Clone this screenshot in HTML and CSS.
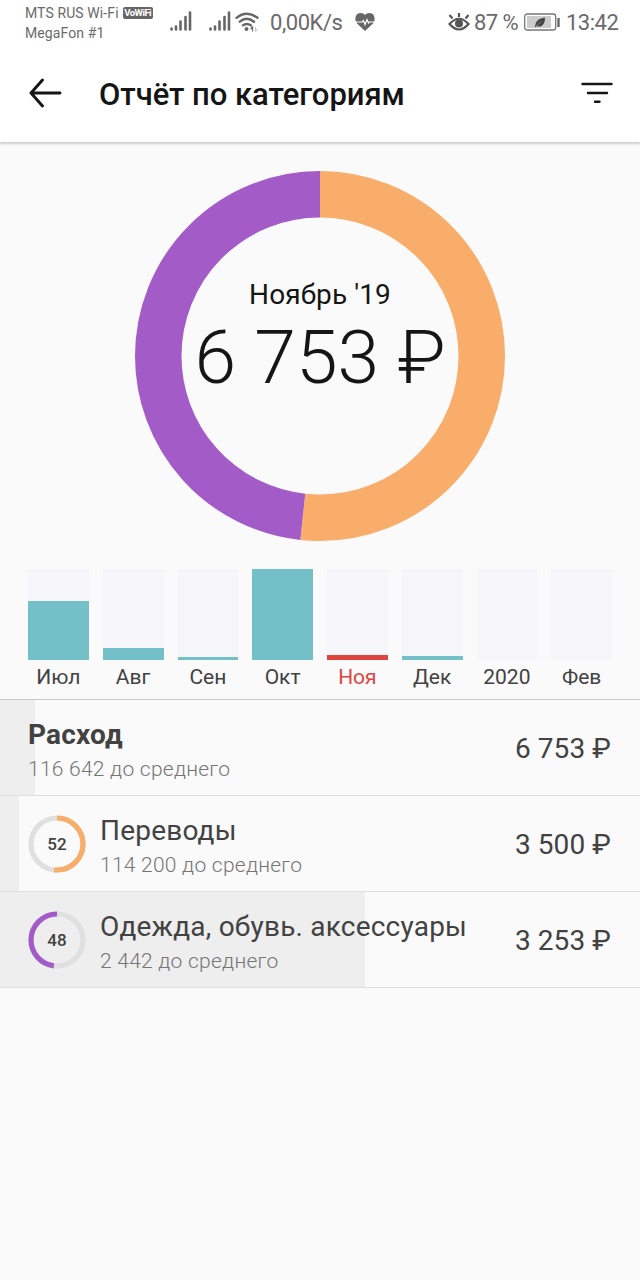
FILE: index.html
```html
<!DOCTYPE html>
<html lang="ru">
<head>
    <meta charset="UTF-8">
    <title>Отчёт по категориям</title>
    <link rel="stylesheet" href="styles.css">
</head>
<body>
    <div class="status-bar">
        <div class="carriers">
            <div class="carrier"><span class="carrier-name">MTS RUS Wi-Fi</span><span class="vowifi">VoWiFi</span></div>
            <div class="carrier"><span class="carrier-name second">MegaFon #1</span></div>
        </div>
        <svg class="signal" width="22" height="20" viewBox="0 0 22 20">
            <path d="M1.5 17.5v1M6 15.5v3M10.5 10.5v8M15.5 6v12.5M20 1.5v17"/>
        </svg>
        <svg class="signal signal-2" width="22" height="20" viewBox="0 0 22 20">
            <path d="M1.5 17.5v1M6 15.5v3M10.5 10.5v8M15.5 6v12.5M20 1.5v17"/>
        </svg>
        <svg class="wifi" width="24" height="20" viewBox="0 0 24 20">
            <path d="M1.5 5.8Q11.5-2.5 22.5 5.8M4.8 9.7Q11.5 4 19 9.7M8 13.3Q11.8 10.5 15.8 13.3"/>
            <circle cx="11.5" cy="17" r="2"/>
            <path class="wifi-arrow" d="M17.5 19v-4l-1.500 1.500"/>
            <path class="wifi-arrow faded" d="M20.500 15v4l1.500-1.500"/>
        </svg>
        <span class="speed">0,00K/s</span>
        <svg class="heart" width="20" height="18" viewBox="0 0 20 18">
            <path d="M10 18L2 10.5C-1 7 .2 0 5.500 0C7.500 0 9 .8 10 2C11 .8 12.500 0 14.500 0C19.800 0 21 7 18 10.500Z"/>
            <path class="pulse" d="M0 9h7l1.500-1.500 1.500 4 2-5 1.500 3.500 1-1h6"/>
        </svg>
        <svg class="eye" width="22" height="20" viewBox="0 0 22 20">
            <path d="M1.500 12Q11 1.500 20.500 12Q11 23 1.500 12ZM11 5V1M4.500 6.500L1.500 3M17.500 6.500L20.500 3"/>
            <circle cx="11" cy="11.500" r="4"/>
        </svg>
        <span class="percent">87 %</span>
        <svg class="battery" width="36" height="18" viewBox="0 0 36 18">
            <rect class="case" x=".7" y="1" width="31" height="16" rx="2.500"/>
            <rect class="charge" x="3" y="3" width="24" height="12"/>
            <path class="tip" d="M34.500 5v9"/>
            <path class="leaf" d="M11 14.500Q11 12 12 9.500Q14 5.500 21 4.500Q21 11.500 17 13.200Q14.500 14 12.800 13Z"/>
            <path class="vein" d="M12.500 13L17 8.500"/>
        </svg>
        <span class="clock">13:42</span>
    </div>

    <header class="header">
        <svg class="back" width="34" height="30" viewBox="0 0 34 30">
            <path d="M14.500 2L3 15l11.500 13M3 15H32"/>
        </svg>
        <h1>Отчёт по категориям</h1>
        <svg class="filter" width="34" height="22" viewBox="0 0 34 22">
            <path d="M2.500 2h29M8 11h19M15 19.800h4.500"/>
        </svg>
    </header>

    <div class="chart">
        <svg class="donut" width="370" height="370" viewBox="0 0 370 370">
            <circle class="part orange" cx="185" cy="185" r="161.75" pathLength="100" stroke-dasharray="51.7 48.3"/>
            <circle class="part purple" cx="185" cy="185" r="161.75" pathLength="100" stroke-dasharray="48.3 51.7" stroke-dashoffset="-51.7"/>
        </svg>
        <div class="total">
            <div class="total-month">Ноябрь '19</div>
            <div class="total-sum">6 753 ₽</div>
        </div>
    </div>

    <div class="months">
        <div class="month">
            <div class="track"><div class="bar" style="height: 59px"></div></div>
            <span>Июл</span>
        </div>
        <div class="month">
            <div class="track"><div class="bar" style="height: 12.5px"></div></div>
            <span>Авг</span>
        </div>
        <div class="month">
            <div class="track"><div class="bar" style="height: 3px"></div></div>
            <span>Сен</span>
        </div>
        <div class="month">
            <div class="track"><div class="bar" style="height: 91px"></div></div>
            <span>Окт</span>
        </div>
        <div class="month current">
            <div class="track"><div class="bar" style="height: 5.5px"></div></div>
            <span>Ноя</span>
        </div>
        <div class="month">
            <div class="track"><div class="bar" style="height: 4px"></div></div>
            <span>Дек</span>
        </div>
        <div class="month">
            <div class="track"></div>
            <span>2020</span>
        </div>
        <div class="month">
            <div class="track"></div>
            <span>Фев</span>
        </div>
    </div>

    <div class="list">
        <div class="row" style="background-size: 35px 100%">
            <div class="info">
                <div class="name bold">Расход</div>
                <div class="left">116 642 до среднего</div>
            </div>
            <div class="sum">6 753 ₽</div>
        </div>
        <div class="row" style="background-size: 19px 100%">
            <div class="ring">
                <svg width="58" height="58" viewBox="0 0 58 58">
                    <circle class="ring-base" cx="29" cy="29" r="26"/>
                    <circle class="ring-part orange" cx="29" cy="29" r="26" pathLength="100" stroke-dasharray="52 48"/>
                </svg>
                <span>52</span>
            </div>
            <div class="info">
                <div class="name">Переводы</div>
                <div class="left">114 200 до среднего</div>
            </div>
            <div class="sum">3 500 ₽</div>
        </div>
        <div class="row" style="background-size: 365px 100%">
            <div class="ring">
                <svg width="58" height="58" viewBox="0 0 58 58">
                    <circle class="ring-base" cx="29" cy="29" r="26"/>
                    <circle class="ring-part purple" cx="29" cy="29" r="26" pathLength="100" stroke-dasharray="48 52" stroke-dashoffset="-52"/>
                </svg>
                <span>48</span>
            </div>
            <div class="info">
                <div class="name">Одежда, обувь. аксессуары</div>
                <div class="left">2 442 до среднего</div>
            </div>
            <div class="sum">3 253 ₽</div>
        </div>
    </div>
</body>
</html>
```
FILE: styles.css
```css
* {
    box-sizing: border-box;
}

body {
    font-family: Roboto, "Noto Sans", sans-serif;
    margin: 0;
    min-height: 100vh;
    background: #fafafa;
    color: #424242;
}

svg {
    display: block;
    flex: none;
    fill: none;
}

/* status bar */
.status-bar {
    display: flex;
    align-items: flex-start;
    height: 44px;
    padding-left: 25px;
    background: #fff;
    color: #6a6a6a;
    font-size: 22px;
    line-height: 26px;
    white-space: nowrap;
}

.carriers {
    width: 145px;
    padding-top: 3px;
    font-size: 14px;
    line-height: 20px;
}

.carrier {
    display: flex;
    align-items: center;
    height: 20px;
}

.carrier-name {
    letter-spacing: 0.1px;
}

.vowifi {
    width: 30px;
    height: 12px;
    margin-left: 4px;
    border-radius: 2px;
    background: #666;
    color: #fff;
    font-size: 9.5px;
    font-weight: 700;
    line-height: 12px;
    text-align: center;
    letter-spacing: -0.5px;
}

.signal {
    margin-top: 11px;
    stroke: #666;
    stroke-width: 2.6;
    stroke-linecap: round;
}

.signal-2 {
    margin-left: 17px;
}

.wifi {
    margin: 12px 0 0 4px;
    stroke: #666;
    stroke-width: 2.4;
    stroke-linecap: round;
}

.wifi circle {
    fill: #666;
    stroke: none;
}

.wifi-arrow {
    stroke-width: 1.2;
}

.faded {
    stroke: #ccc;
}

.speed {
    width: 75px;
    margin: 10px 0 0 11px;
    letter-spacing: -0.45px;
}

.heart {
    margin: 13px 0 0 10px;
    fill: #666;
}

.pulse {
    fill: none;
    stroke: #fff;
    stroke-width: 1.2;
}

.eye {
    margin: 12px 0 0 73px;
    stroke: #555;
    stroke-width: 2.2;
}

.eye circle {
    fill: #555;
    stroke: none;
}

.percent {
    width: 46px;
    margin: 10px 0 0 4px;
    letter-spacing: -0.6px;
}

.battery {
    margin: 13px 0 0 4px;
}

.case {
    stroke: #777;
    stroke-width: 1.3;
}

.charge {
    fill: #ccc;
}

.tip {
    stroke: #666;
    stroke-width: 2.4;
}

.leaf {
    fill: #444;
}

.vein {
    stroke: #999;
    stroke-width: 0.8;
}

.clock {
    margin: 10px 0 0 6px;
    letter-spacing: -0.5px;
}

/* header */
.header {
    display: flex;
    align-items: center;
    height: 98px;
    padding: 0 26px 0 28px;
    background: #fff;
    box-shadow: 0 2px 2px rgba(0, 0, 0, 0.18);
    clip-path: inset(0 0 -6px 0);
}

.header svg {
    margin-bottom: 1px;
    stroke: #151515;
    stroke-width: 2.9;
    stroke-linecap: round;
    stroke-linejoin: round;
}

.header .filter {
    stroke-width: 2.4;
}

h1 {
    flex: 1;
    margin: 4px 0 0 37px;
    color: #151515;
    font-size: 31px;
    font-weight: 500;
    line-height: 36px;
    letter-spacing: -0.05px;
    white-space: nowrap;
}

/* donut */
.chart {
    display: grid;
    justify-content: center;
    padding-top: 28.5px;
    height: 427px;
}

.donut,
.total {
    grid-area: 1 / 1;
}

.donut {
    transform: rotate(-90deg);
}

.part {
    stroke-width: 46.5;
}

.orange {
    stroke: #f9ad6a;
}

.purple {
    stroke: #a35bc8;
}

.total {
    position: relative;
    padding-top: 108px;
    color: #151515;
    text-align: center;
    white-space: nowrap;
}

.total-month {
    font-size: 28px;
    line-height: 32px;
    letter-spacing: 0.1px;
}

.total-sum {
    margin-top: 2px;
    font-size: 75px;
    font-weight: 300;
    line-height: 88px;
}

/* months */
.months {
    display: grid;
    grid-template-columns: repeat(8, 1fr);
    gap: 14px;
    height: 130px;
    padding: 0 28px;
}

.month {
    font-size: 21px;
    line-height: 24px;
    text-align: center;
}

.track {
    display: flex;
    align-items: flex-end;
    height: 91px;
    margin-bottom: 5px;
    background: #f5f5fa;
}

.bar {
    width: 100%;
    background: #74c0c8;
}

.current {
    color: #e0443e;
}

.current .bar {
    background: #e0443e;
}

/* list */
.list {
    border-top: 1px solid #c8c8c8;
}

.row {
    display: flex;
    align-items: center;
    height: 96px;
    padding: 0 29px 0 28px;
    border-bottom: 1px solid #e0e0e0;
    background: linear-gradient(#eee, #eee) no-repeat;
}

.ring {
    display: grid;
    place-items: center;
    width: 58px;
    margin-right: 14px;
    font-size: 17px;
    font-weight: 500;
}

.ring svg,
.ring span {
    grid-area: 1 / 1;
}

.ring svg {
    transform: rotate(-90deg);
}

.ring circle {
    stroke-width: 5.2;
}

.ring-base {
    stroke: #e0e0e0;
}

.info {
    flex: 1;
    padding-top: 8px;
    white-space: nowrap;
}

.name {
    font-size: 28px;
    line-height: 34px;
    letter-spacing: 0.2px;
}

.bold {
    font-weight: 700;
}

.left {
    color: #757575;
    font-size: 21px;
    font-weight: 300;
    line-height: 34px;
    letter-spacing: 0.25px;
}

.sum {
    margin-top: 2px;
    font-size: 28px;
    line-height: 34px;
    letter-spacing: 0.1px;
    white-space: nowrap;
}
```
